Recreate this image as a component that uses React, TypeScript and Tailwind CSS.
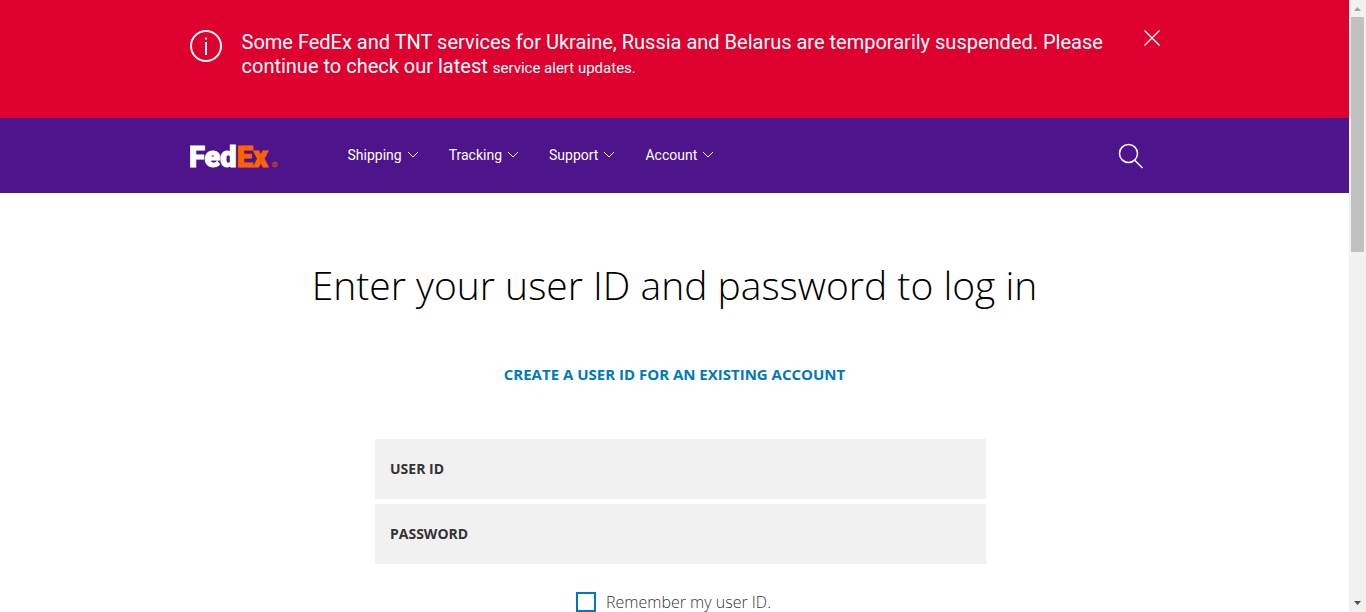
import React from "react";

const navItems = ["Shipping", "Tracking", "Support", "Account"];

function AlertBanner() {
  return (
    <section className="bg-[#de002e] font-[Roboto,sans-serif] text-white">
      <div className="mx-auto flex min-h-[118px] max-w-[970px] items-start pt-[30px]">
        <svg className="size-8 shrink-0" viewBox="0 0 32 32" fill="none" stroke="currentColor" strokeWidth="2" aria-hidden="true">
          <circle cx="16" cy="16" r="15" />
          <path d="M16 12v13" />
          <path d="M16 7.5v2" />
        </svg>
        <p className="ml-5 flex-1 text-xl leading-6">
          Some FedEx and TNT services for Ukraine, Russia and Belarus are temporarily suspended. Please continue to
          check our latest{" "}
          <a href="#alerts" className="text-[15px]">
            service alert updates.
          </a>
        </p>
        <button type="button" aria-label="Close" className="ml-6 shrink-0">
          <svg className="size-4" viewBox="0 0 16 16" fill="none" stroke="currentColor" strokeWidth="1.3" aria-hidden="true">
            <path d="M.5 .5l15 15M15.5 .5l-15 15" />
          </svg>
        </button>
      </div>
    </section>
  );
}

function Logo() {
  return (
    <a href="#home" aria-label="FedEx" className="block shrink-0">
      <svg className="h-[30px] w-[88px]" viewBox="0 0 88 30" aria-hidden="true">
        <text x="-1" y="26" fontSize="29" fontWeight="900" fontFamily="Roboto, sans-serif" strokeWidth="1">
          <tspan fill="#fff" stroke="#fff">Fed</tspan>
          <tspan fill="#ff6200" stroke="#ff6200">Ex</tspan>
        </text>
        <circle cx="85" cy="23.5" r="2.400" fill="none" stroke="#ff6200" strokeWidth=".7" />
        <path d="M84.200 25v-3h1q.9 0 .9.8t-.9.8h-1m1 0l1 1.400" fill="none" stroke="#ff6200" strokeWidth=".5" />
      </svg>
    </a>
  );
}

function Header() {
  return (
    <header className="bg-[#4d148c] font-[Roboto,sans-serif] text-white">
      <div className="mx-auto flex h-[75px] max-w-[970px] items-center">
        <Logo />
        <nav className="ml-[70px] flex gap-[30px] pb-0.5">
          {navItems.map((item) => (
            <button key={item} type="button" className="flex items-center gap-[5px] text-sm leading-5">
              {item}
              <svg className="h-[7px] w-3" viewBox="0 0 12 7" fill="none" stroke="currentColor" aria-hidden="true">
                <path d="M1 1l5 5 5-5" />
              </svg>
            </button>
          ))}
        </nav>
        <button type="button" aria-label="Search" className="mr-4 ml-auto">
          <svg className="size-[26px]" viewBox="0 0 26 26" fill="none" stroke="currentColor" strokeWidth="1.500" aria-hidden="true">
            <circle cx="10.500" cy="10.500" r="9" />
            <path d="M16.500 17l8 8" />
          </svg>
        </button>
      </div>
    </header>
  );
}

function Field({ id, label, type }: { id: string; label: string; type: string }) {
  return (
    <div className="grid items-center">
      <input id={id} type={type} className="col-start-1 row-start-1 h-[60px] w-full bg-[#f1f1f1] px-[15px]" />
      <label htmlFor={id} className="col-start-1 row-start-1 justify-self-start pl-[15px] text-sm leading-5 font-bold text-[#333]">
        {label}
      </label>
    </div>
  );
}

function LoginForm() {
  return (
    <main className="flex flex-col items-center pt-[67px] font-['Open_Sans',sans-serif]">
      <h1 className="text-[39px] leading-[50px] font-light text-black">Enter your user ID and password to log in</h1>
      <a href="#create" className="mt-[54px] text-[15px] leading-5 font-bold text-[#007ab7]">
        CREATE A USER ID FOR AN EXISTING ACCOUNT
      </a>
      <form className="mt-[55px] w-full max-w-[623px] pl-3">
        <div className="grid gap-[5px]">
          <Field id="user-id" label="USER ID" type="text" />
          <Field id="password" label="PASSWORD" type="password" />
        </div>
        <div className="mt-7 flex items-center justify-center gap-[10px] pr-[14px]">
          <input id="remember" type="checkbox" className="size-5 appearance-none border-2 border-[#007ab7] bg-white" />
          <label htmlFor="remember" className="text-base leading-5 font-light text-[#333]">
            Remember my user ID.
          </label>
        </div>
      </form>
    </main>
  );
}

function ScrollTrack() {
  return (
    <div className="flex w-[17px] shrink-0 flex-col items-center bg-[#f1f1f1]" aria-hidden="true">
      <svg className="h-[17px] w-[17px] shrink-0" viewBox="0 0 17 17">
        <path d="M5 11l3.500-4 3.500 4z" fill="#a3a3a3" />
      </svg>
      <div className="h-[235px] w-[13px] bg-[#c1c1c1]" />
      <svg className="mt-auto h-[17px] w-[17px] shrink-0" viewBox="0 0 17 17">
        <path d="M5 6l3.500 4L12 6z" fill="#505050" />
      </svg>
    </div>
  );
}

export default function App() {
  return (
    <div className="flex h-screen overflow-hidden bg-white">
      <div className="min-w-0 flex-1 overflow-hidden">
        <AlertBanner />
        <Header />
        <LoginForm />
      </div>
      <ScrollTrack />
    </div>
  );
}
